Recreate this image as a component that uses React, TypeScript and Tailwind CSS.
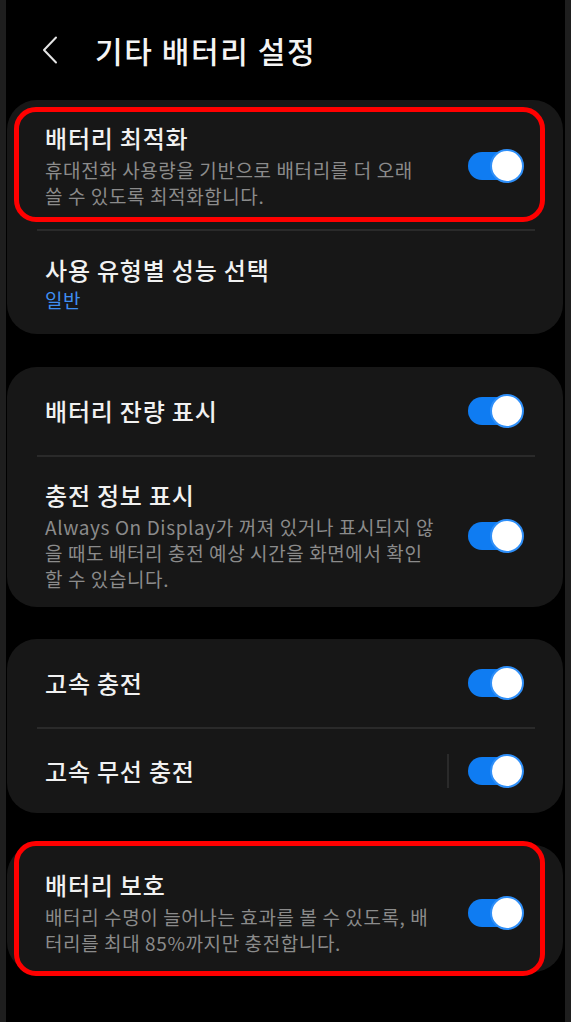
import React from "react";

function Toggle() {
  return (
    <div className="relative w-[56px] h-[34px] shrink-0">
      <div className="absolute left-0 top-[3px] w-[50px] h-[28px] rounded-full bg-[#0f7cf2]" />
      <div className="absolute right-0 top-0 w-[34px] h-[34px] rounded-full bg-white border-2 border-[#2f8ff8]" />
    </div>
  );
}

function Divider() {
  return <div className="h-[2px] bg-[#2a2a2a] ml-[30px] mr-[28px]" />;
}

function RedBox({ className }: { className: string }) {
  return (
    <div
      className={
        "absolute border-[5px] border-[#ff0000] rounded-[22px] pointer-events-none " +
        className
      }
    />
  );
}

function Sub({ lines }: { lines: string[] }) {
  return (
    <div className="mt-[4px] text-[19px] leading-[26px] tracking-[0.6px] text-[#8b8b8b]">
      {lines.map((l, i) => (
        <div key={i} className="whitespace-nowrap">
          {l}
        </div>
      ))}
    </div>
  );
}

function Title({ children }: { children: React.ReactNode }) {
  return (
    <div className="text-[24px] leading-[30px] tracking-[0.8px] font-medium text-[#f1f1f1] whitespace-nowrap">
      {children}
    </div>
  );
}

export default function App() {
  return (
    <div className="w-[571px] h-[1022px] bg-black flex overflow-hidden font-['Noto_Sans_CJK_KR','Noto_Sans',sans-serif]">
      <div className="w-[6px] bg-[#1e1e1e] shrink-0" />
      <div className="flex-1 pl-[1px] pr-[2px]">
        {/* Header */}
        <div className="h-[100px] flex items-center">
          <svg
            className="ml-[35px]"
            width="16"
            height="28"
            viewBox="0 0 16 28"
            fill="none"
          >
            <polyline
              points="14,1.5 2,14 14,26.5"
              stroke="#e4e4e4"
              strokeWidth="2"
              strokeLinejoin="round"
              strokeLinecap="round"
            />
          </svg>
          <div className="ml-[37px] text-[30px] leading-[36px] tracking-[1.6px] font-medium text-[#f4f4f4] whitespace-nowrap">
            기타 배터리 설정
          </div>
        </div>

        {/* Card 1 */}
        <div className="rounded-[30px] bg-[#171717]">
          <div className="relative flex items-center pl-[38px] pr-[39px] pt-[23px] pb-[20px]">
            <RedBox className="left-[7px] top-[7px] right-[18px] bottom-[7px]" />
            <div className="flex-1">
              <Title>배터리 최적화</Title>
              <Sub
                lines={[
                  "휴대전화 사용량을 기반으로 배터리를 더 오래",
                  "쓸 수 있도록 최적화합니다.",
                ]}
              />
            </div>
            <Toggle />
          </div>
          <Divider />
          <div className="pl-[38px] pr-[39px] pt-[24px] pb-[21px]">
            <Title>사용 유형별 성능 선택</Title>
            <div className="mt-[2px] text-[19px] leading-[26px] tracking-[0.6px] text-[#3f8ef0]">
              일반
            </div>
          </div>
        </div>

        {/* Card 2 */}
        <div className="mt-[33px] rounded-[30px] bg-[#171717]">
          <div className="flex items-center pl-[38px] pr-[39px] py-[27px]">
            <div className="flex-1">
              <Title>배터리 잔량 표시</Title>
            </div>
            <Toggle />
          </div>
          <Divider />
          <div className="flex items-center pl-[38px] pr-[39px] pt-[23px] pb-[15px]">
            <div className="flex-1">
              <Title>충전 정보 표시</Title>
              <Sub
                lines={[
                  "Always On Display가 꺼져 있거나 표시되지 않",
                  "을 때도 배터리 충전 예상 시간을 화면에서 확인",
                  "할 수 있습니다.",
                ]}
              />
            </div>
            <Toggle />
          </div>
        </div>

        {/* Card 3 */}
        <div className="mt-[32px] rounded-[30px] bg-[#171717]">
          <div className="flex items-center pl-[38px] pr-[39px] py-[27px]">
            <div className="flex-1">
              <Title>고속 충전</Title>
            </div>
            <Toggle />
          </div>
          <Divider />
          <div className="flex items-center pl-[38px] pr-[39px] py-[25px]">
            <div className="flex-1">
              <Title>고속 무선 충전</Title>
            </div>
            <div className="w-[2px] h-[34px] bg-[#2a2a2a] mr-[19px]" />
            <Toggle />
          </div>
        </div>

        {/* Card 4 */}
        <div className="mt-[32px] rounded-[30px] bg-[#171717]">
          <div className="relative flex items-center pl-[38px] pr-[39px] pt-[25px] pb-[16px]">
            <RedBox className="left-[7px] top-[-4px] right-[18px] bottom-[-4px]" />
            <div className="flex-1">
              <Title>배터리 보호</Title>
              <Sub
                lines={[
                  "배터리 수명이 늘어나는 효과를 볼 수 있도록, 배",
                  "터리를 최대 85%까지만 충전합니다.",
                ]}
              />
            </div>
            <Toggle />
          </div>
        </div>
      </div>
      <div className="w-[6px] bg-[#1e1e1e] shrink-0" />
    </div>
  );
}
